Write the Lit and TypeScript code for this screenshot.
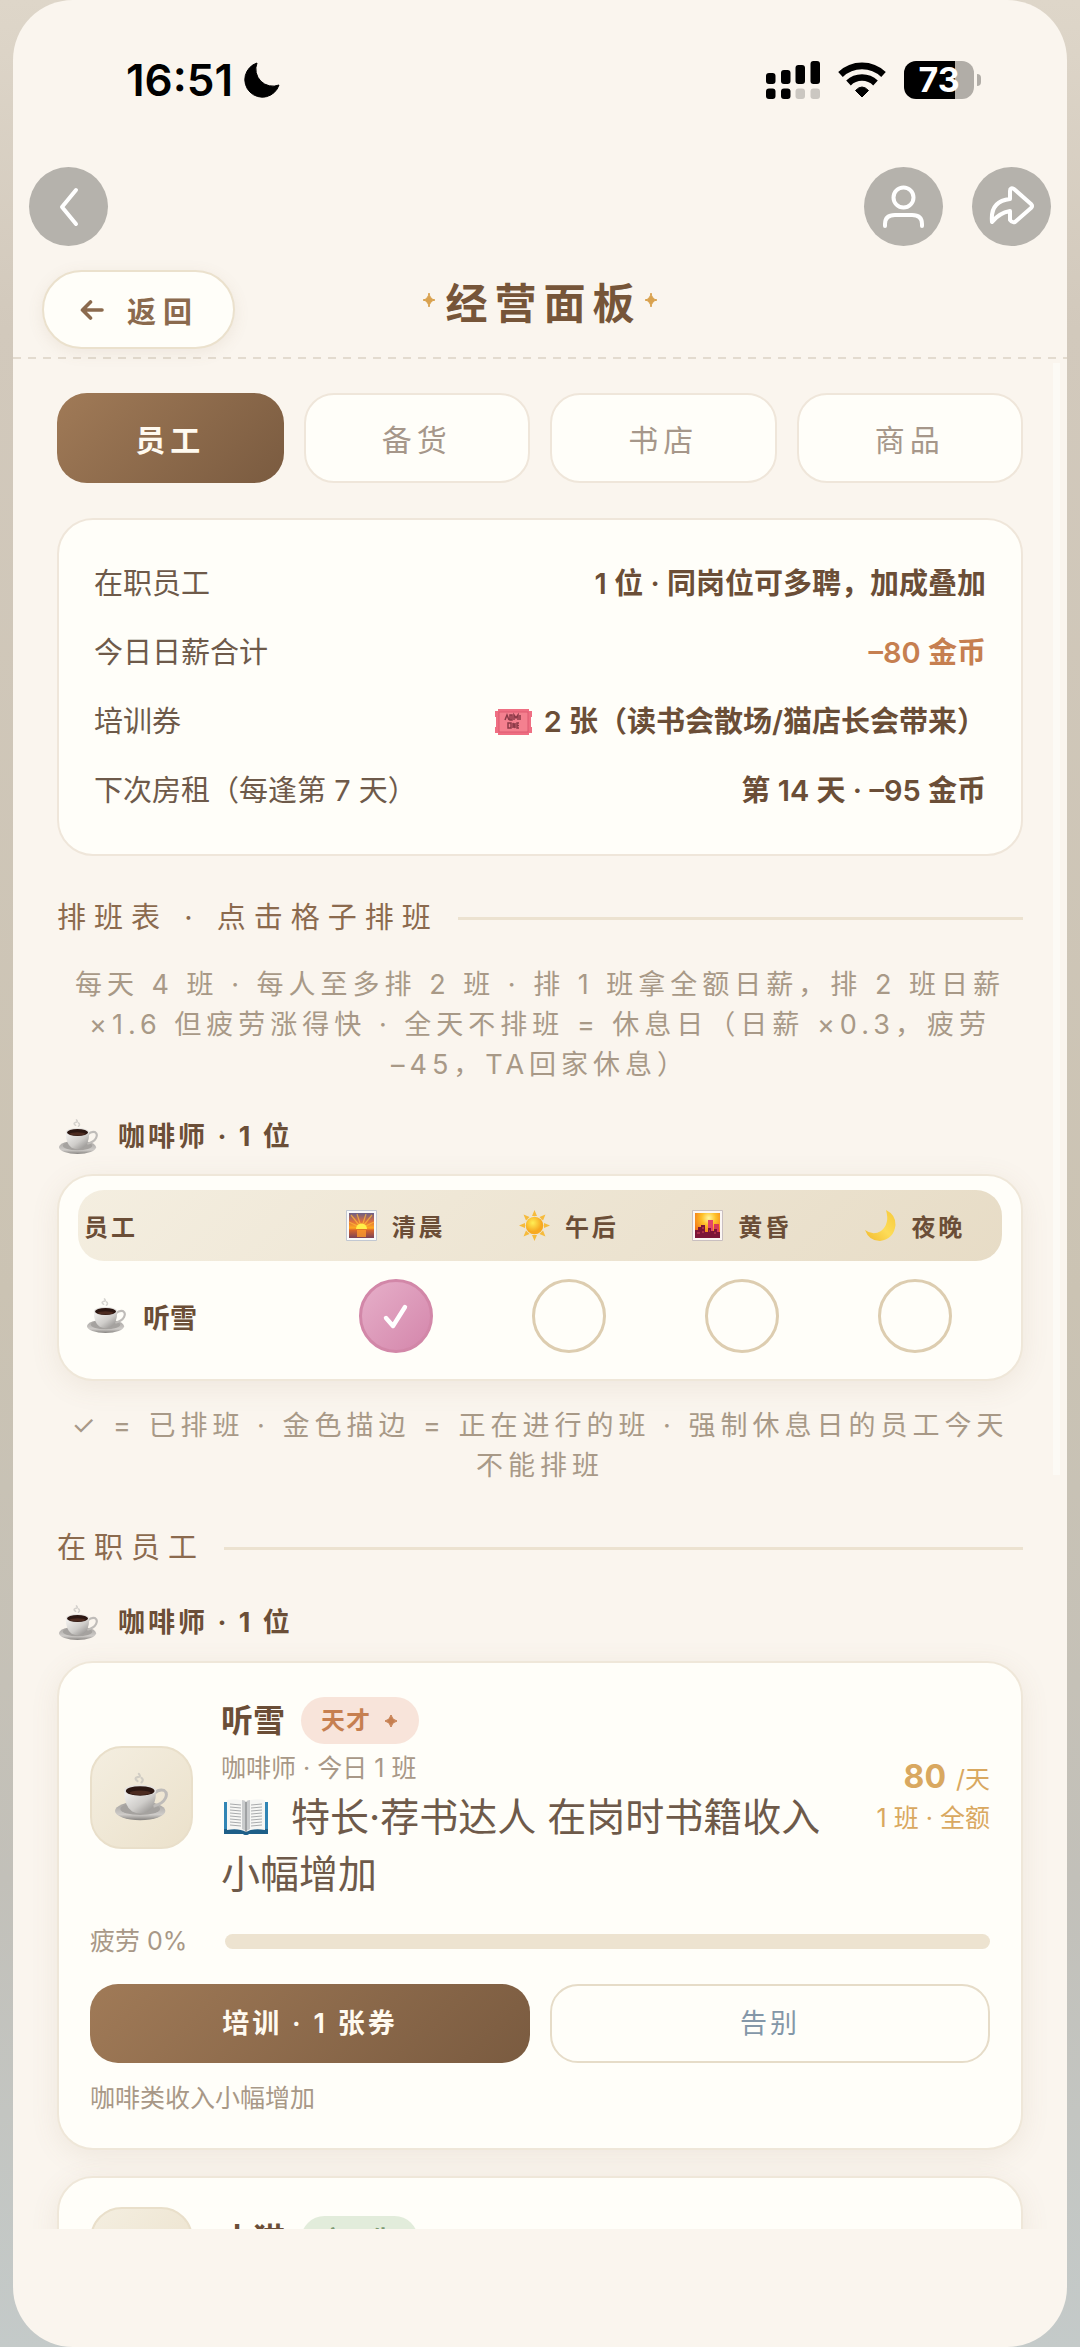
import { LitElement, html, css, svg, nothing } from "lit";
import { customElement, property, state } from "lit/decorators.js";
import { classMap } from "lit/directives/class-map.js";

const cup = () => html`<svg class="emoji" viewBox="0 0 40 36" aria-hidden="true">
  <defs>
    <linearGradient id="porcelain" x1="0" y1="0" x2="1" y2="1">
      <stop offset="0" stop-color="#f6f5f3" />
      <stop offset="0.55" stop-color="#cfcdca" />
      <stop offset="1" stop-color="#858280" />
    </linearGradient>
    <linearGradient id="saucer" x1="0" y1="0" x2="0" y2="1">
      <stop offset="0" stop-color="#a09d9a" />
      <stop offset="0.7" stop-color="#cfccc9" />
      <stop offset="1" stop-color="#85827f" />
    </linearGradient>
  </defs>
  <path d="M17 6 Q14 4 17 3 Q20 3 18 0.5 M20 7 Q22 5 20 3.5" fill="none" stroke="#bdbab7" stroke-width="1.6" stroke-linecap="round" opacity="0.6" />
  <ellipse cx="19" cy="28.5" rx="19" ry="7" fill="url(#saucer)" />
  <ellipse cx="19" cy="27" rx="15" ry="4.6" fill="#a5a29f" />
  <path d="M30 15 Q33 12 37 13 Q40 15 38 19 Q36 23 29 25" fill="none" stroke="#bfbcb9" stroke-width="2.2" />
  <path d="M7 13 Q7 25 13 29 Q19 32 25 29 Q31 25 31 13 Z" fill="url(#porcelain)" />
  <ellipse cx="19" cy="13" rx="12" ry="4.3" fill="#e6e4e1" />
  <ellipse cx="19" cy="13.4" rx="10.8" ry="3.6" fill="#2c1712" />
  <ellipse cx="19" cy="14.8" rx="8" ry="1.7" fill="#4c2b20" />
</svg>`;

const ticket = html`<svg class="ticket" viewBox="0 0 37 26" aria-hidden="true">
  <path d="M3 0 H34 V2 H37 V8 H36 V18 H37 V24 H34 V26 H3 V24 H0 V18 H1 V8 H0 V2 H3 Z" fill="#ef6f83" />
  <rect x="4" y="3" width="29" height="20" fill="#f4808f" stroke="#dd5a70" stroke-width="1" />
  <g stroke="#8c3a48" stroke-width="1.5" fill="none">
    <path d="M10 11 L12 6 L14 11 M15 6 V11 H17 V6 Z M19 11 V6 L21 9 L23 6 V11 M25 6 V11" />
    <path d="M13 14 H16 V19 H13 Z M18 19 V14 L20 19 V14 M24 14 H22 V19 H24 M22 16.5 H24" />
  </g>
</svg>`;

const book = html`<svg class="book" viewBox="0 0 46 36" aria-hidden="true">
  <path d="M1 3 H45 V35 H26 Q23 37 20 35 H1 Z" fill="#3185b5" />
  <path d="M1 30 H45 V35 H26 Q23 37 20 35 H1 Z" fill="#1e5f88" />
  <path d="M4 1 Q16 -1 23 3 Q30 -1 42 1 V31 Q30 29 23 33 Q16 29 4 31 Z" fill="#f6f6f4" />
  <path d="M19 1 Q22 1 23 3 Q24 1 27 1 V30 Q24 31 23 33 Q22 31 19 30 Z" fill="#c9cbcc" />
  <path d="M23 3 V33" stroke="#77797a" stroke-width="1" />
  <g stroke="#a9abad" stroke-width="1">
    <path d="M7 5 L18 6 M7 8 L18 9 M7 11 L18 12 M7 14 L18 15 M7 17 L18 18 M7 20 L18 21 M7 23 L18 24 M7 26 L18 27" />
    <path d="M39 5 L28 6 M39 8 L28 9 M39 11 L28 12 M39 14 L28 15 M39 17 L28 18 M39 20 L28 21 M39 23 L28 24 M39 26 L28 27" />
  </g>
</svg>`;

const sunrise = html`<svg class="slot" viewBox="0 0 31 31" aria-hidden="true">
  <defs>
    <linearGradient id="dawn" x1="0" y1="0" x2="0" y2="1">
      <stop offset="0" stop-color="#6a6088" />
      <stop offset="0.35" stop-color="#e0703c" />
      <stop offset="0.6" stop-color="#ffab1f" />
      <stop offset="0.68" stop-color="#d9652b" />
      <stop offset="1" stop-color="#7b4358" />
    </linearGradient>
  </defs>
  <rect width="31" height="31" rx="1" fill="#c2c8d2" />
  <rect x="1" y="1" width="29" height="29" fill="#fafafa" />
  <rect x="3" y="3" width="25" height="25" fill="url(#dawn)" />
  <path d="M15.5 18 L5 5 M15.5 18 L11 4 M15.5 18 L20 4 M15.5 18 L26 5 M15.5 18 L3 12 M15.5 18 L28 12" stroke="#ffb83a" stroke-width="1.2" opacity="0.75" />
  <path d="M10 19 A5.5 5.5 0 0 1 21 19 Z" fill="#fff04a" />
  <rect x="11" y="20" width="9" height="7" fill="#ff9a2c" opacity="0.8" />
</svg>`;

const sun = html`<svg class="slot" viewBox="0 0 31 31" aria-hidden="true">
  <defs>
    <radialGradient id="noon" cx="0.4" cy="0.35">
      <stop offset="0" stop-color="#ffee55" />
      <stop offset="1" stop-color="#f7a921" />
    </radialGradient>
  </defs>
  ${[0, 45, 90, 135, 180, 225, 270, 315].map(
    (a) => svg`<path d="M13 6 L15.5 0 L18 6 Z" fill="#f6bb3c" transform="rotate(${a} 15.5 15.5)" />`
  )}
  <circle cx="15.5" cy="15.5" r="8.8" fill="url(#noon)" />
</svg>`;

const dusk = html`<svg class="slot" viewBox="0 0 31 31" aria-hidden="true">
  <defs>
    <radialGradient id="glow" cx="0.55" cy="0.2" r="0.8">
      <stop offset="0" stop-color="#fff6a0" />
      <stop offset="0.35" stop-color="#ffc12a" />
      <stop offset="1" stop-color="#ee5a12" />
    </radialGradient>
  </defs>
  <rect width="31" height="31" rx="1" fill="#c9bfc0" />
  <rect x="1" y="1" width="29" height="29" fill="#fbf6f4" />
  <rect x="3" y="3" width="25" height="25" fill="url(#glow)" />
  <path d="M16 28 V10 H21 V28 Z" fill="#e2466a" />
  <path d="M22 28 V14 H27 V28 Z" fill="#d83a58" />
  <path d="M3 28 V20 H6 V17 H9 V15 H13 V28 Z M13 28 V22 H16 V18 H19 V28 Z M19 28 V21 H22 V19 H25 V22 H28 V28 Z" fill="#7c1437" />
  <path d="M5 23 H8 M10 18 H12 M10 22 H12 M17 21 H18 M22 23 H24" stroke="#d6455b" stroke-width="1" />
</svg>`;

const night = html`<svg class="slot" viewBox="0 0 31 31" aria-hidden="true">
  <defs>
    <linearGradient id="crescent" x1="0" y1="1" x2="1" y2="0">
      <stop offset="0" stop-color="#f2b92c" />
      <stop offset="0.5" stop-color="#fddc58" />
      <stop offset="1" stop-color="#f6c93a" />
    </linearGradient>
  </defs>
  <path d="M21 0 Q31 5 30.5 15 Q29 29 15 31 Q4 31 0 20 Q8 26 16 21 Q25 14 21 0 Z" fill="url(#crescent)" />
</svg>`;

const baseStyles = css`
  * {
    box-sizing: border-box;
  }
  h1,
  h2,
  h3,
  p,
  dl,
  dt,
  dd {
    margin: 0;
    font-weight: inherit;
    font-size: inherit;
  }
  button {
    margin: 0;
    font: inherit;
    color: inherit;
    cursor: pointer;
  }
  svg {
    display: block;
    flex: none;
  }
`;

interface Pay {
  wage: number;
  note: string;
  fatigue: number;
  effect: string;
}

interface Staff {
  name: string;
  badge: string;
  tone: "genius" | "fresh";
  role: string;
  talent?: string;
  pay?: Pay;
}

@customElement("status-bar")
class StatusBar extends LitElement {
  static styles = [
    baseStyles,
    css`
      :host {
        display: flex;
        align-items: center;
        justify-content: space-between;
        height: 160px;
        padding: 0 86px 0 113px;
        color: #000;
      }
      .clock,
      .signals {
        display: flex;
        align-items: center;
      }
      .clock {
        gap: 11px;
        font-size: 44px;
        font-weight: 600;
      }
      .moon {
        width: 36px;
        height: 36px;
      }
      .signals {
        gap: 18px;
      }
      .cell {
        width: 54px;
        height: 38px;
      }
      .wifi {
        width: 48px;
        height: 36px;
      }
      .battery {
        display: flex;
        align-items: center;
        gap: 3px;
      }
      .battery::after {
        content: "";
        width: 4px;
        height: 12px;
        border-radius: 0 6px 6px 0;
        background: #b1ada7;
      }
      .level {
        display: grid;
        place-items: center;
        width: 70px;
        height: 38px;
        border-radius: 12px;
        background: linear-gradient(90deg, #000 73%, #b1ada7 73%);
        color: #fff;
        font-size: 34px;
        line-height: 38px;
        font-weight: 700;
      }
    `,
  ];
  render() {
    return html`
      <div class="clock">
        <span>16:51</span>
        <svg class="moon" viewBox="0 0 36 36" aria-hidden="true">
          <path d="M13 1 A17.5 17.5 0 1 0 35 23 A17 17 0 0 1 13 1 Z" fill="#000" stroke="#000" stroke-linejoin="round" />
        </svg>
      </div>
      <div class="signals">
        <svg class="cell" viewBox="0 0 54 38" aria-hidden="true">
          <rect x="0" y="12" width="9.5" height="11" rx="3" />
          <rect x="15" y="9" width="9.5" height="14" rx="3" />
          <rect x="29.5" y="4" width="9.5" height="19" rx="3" />
          <rect x="44.5" y="0" width="9.5" height="23" rx="3" />
          <rect x="0" y="27.5" width="9.5" height="10.5" rx="3" />
          <rect x="15" y="27.5" width="9.5" height="10.5" rx="3" />
          <rect x="29.5" y="27.5" width="9.5" height="10.5" rx="3" fill="#cbc7c1" />
          <rect x="44.5" y="27.5" width="9.5" height="10.5" rx="3" fill="#cbc7c1" />
        </svg>
        <svg class="wifi" viewBox="0 0 48 36" fill="none" stroke="#000" stroke-width="6.6" aria-hidden="true">
          <path d="M2.5 12.5 A31 31 0 0 1 45.5 12.5" />
          <path d="M10.5 21 A19.5 19.5 0 0 1 37.5 21" />
          <path d="M24 35 L17.5 28.5 Q24 21.5 30.5 28.5 Z" fill="#000" stroke-width="1" stroke-linejoin="round" />
        </svg>
        <div class="battery"><span class="level">73</span></div>
      </div>
    `;
  }
}

@customElement("staff-card")
class StaffCard extends LitElement {
  @property({ attribute: false }) staff!: Staff;

  static styles = [
    baseStyles,
    css`
      :host {
        display: block;
        padding: 29px 31px 30px;
        border: 2px solid #efe7d9;
        border-radius: 36px;
        background: #fffef9;
        box-shadow: 0 6px 28px rgba(139, 105, 74, 0.1);
        color: #a89887;
        font-size: 25px;
        line-height: 39px;
      }
      .top {
        display: flex;
        align-items: center;
        gap: 28px;
      }
      .avatar {
        flex: none;
        display: grid;
        place-items: center;
        width: 103px;
        height: 103px;
        border: 2px solid #e9dfca;
        border-radius: 32px;
        background: linear-gradient(135deg, #f4eee0, #ebe1cb);
      }
      .avatar .emoji {
        width: 53px;
        height: 50px;
      }
      .info {
        flex: 1;
        min-width: 0;
      }
      .who {
        display: flex;
        align-items: center;
        gap: 16px;
        height: 57px;
      }
      .name {
        color: #6b4e37;
        font-size: 32px;
        font-weight: 700;
      }
      .badge {
        display: flex;
        align-items: center;
        gap: 14px;
        padding: 0 22px 0 20px;
        border-radius: 24px;
        font-size: 24px;
        line-height: 47px;
        font-weight: 600;
        letter-spacing: 1px;
      }
      .badge svg {
        width: 12px;
        height: 14px;
      }
      .genius {
        background: #f8e4da;
        color: #c67f50;
      }
      .fresh {
        background: #e2ecdb;
        color: #7d9a74;
      }
      .talent {
        color: #6e5a4a;
        font-size: 39px;
        line-height: 57px;
      }
      .book {
        display: inline-block;
        width: 46px;
        height: 36px;
        margin: 0 22px 0 2px;
        vertical-align: -4px;
      }
      .wage {
        flex: none;
        text-align: right;
        color: #d9a860;
        font-size: 25px;
      }
      .rate {
        display: flex;
        align-items: baseline;
        justify-content: flex-end;
        gap: 10px;
      }
      .rate strong {
        font-size: 32px;
        font-weight: 700;
      }
      .fatigue {
        display: flex;
        align-items: center;
        justify-content: space-between;
        margin-top: 20px;
      }
      .meter {
        width: 85%;
        height: 15px;
        border-radius: 8px;
        background: #ede3d0;
        overflow: hidden;
      }
      .fill {
        height: 100%;
        background: #d9a860;
      }
      .actions {
        display: grid;
        grid-template-columns: 1fr 1fr;
        gap: 20px;
        margin: 23px 0 16px;
      }
      .train,
      .leave {
        height: 79px;
        padding: 0;
        border-radius: 28px;
        font-size: 27px;
        letter-spacing: 3px;
      }
      .train {
        border: 0;
        background: linear-gradient(135deg, #a07a57, #7a5b40);
        color: #fffaf0;
        font-weight: 600;
      }
      .leave {
        border: 2px solid #e6dcc8;
        background: #fffef9;
        color: #8497a8;
      }
    `,
  ];

  private wage(p: Pay) {
    return html`<div class="wage">
      <div class="rate"><strong>${p.wage}</strong><span>/天</span></div>
      <div>${p.note}</div>
    </div>`;
  }

  private details(p: Pay) {
    return html`
      <div class="fatigue">
        <span>疲劳 ${p.fatigue}%</span>
        <div class="meter" role="progressbar" aria-label="疲劳" aria-valuenow=${p.fatigue}>
          <div class="fill" style="width:${p.fatigue}%"></div>
        </div>
      </div>
      <div class="actions">
        <button class="train" type="button">培训 · 1 张券</button>
        <button class="leave" type="button">告别</button>
      </div>
      <p>${p.effect}</p>
    `;
  }

  render() {
    const s = this.staff;
    return html`
      <div class="top">
        <div class="avatar">${cup()}</div>
        <div class="info">
          <div class="who">
            <h3 class="name">${s.name}</h3>
            <span class="badge ${s.tone}"
              >${s.badge}${s.tone === "genius"
                ? html`<svg viewBox="0 0 12 14" fill="currentColor" aria-hidden="true">
                    <path d="M6 1 Q7 6 12 7 Q7 8 6 13 Q5 8 0 7 Q5 6 6 1 Z" stroke="currentColor" />
                  </svg>`
                : nothing}</span
            >
          </div>
          <p>${s.role}</p>
          ${s.talent ? html`<p class="talent">${book}${s.talent}</p>` : nothing}
        </div>
        ${s.pay ? this.wage(s.pay) : nothing}
      </div>
      ${s.pay ? this.details(s.pay) : nothing}
    `;
  }
}

@customElement("app-root")
class AppRoot extends LitElement {
  @state() private tab = "员工";
  @state() private shifts = [true, false, false, false];

  private tabs = ["员工", "备货", "书店", "商品"];
  private slots = [
    { icon: sunrise, label: "清晨" },
    { icon: sun, label: "午后" },
    { icon: dusk, label: "黄昏" },
    { icon: night, label: "夜晚" },
  ];
  private team: Staff[] = [
    {
      name: "听雪",
      badge: "天才",
      tone: "genius",
      role: "咖啡师 · 今日 1 班",
      talent: "特长·荐书达人 在岗时书籍收入小幅增加",
      pay: { wage: 80, note: "1 班 · 全额", fatigue: 0, effect: "咖啡类收入小幅增加" },
    },
    { name: "小猫", badge: "实习生", tone: "fresh", role: "咖啡师" },
  ];

  static styles = [
    baseStyles,
    css`
      :host {
        display: block;
        height: 100vh;
        padding: 0 13px;
        overflow: hidden;
        background: linear-gradient(180deg, #ded6c9 0, #d2c9bc 14%, #cbc3b3 55%, #c2c0b9 80%, #c4cac9 100%);
        font-family: Inter, "Noto Sans CJK SC", "DejaVu Sans", sans-serif;
        color: #6e5a4a;
      }
      .phone {
        display: flex;
        flex-direction: column;
        height: 100%;
        padding-bottom: 118px;
        border-radius: 60px;
        background: #faf5ee;
        overflow: hidden;
      }
      .tools {
        flex: none;
        display: flex;
        gap: 29px;
        padding: 7px 16px 24px;
      }
      .tool {
        width: 79px;
        height: 79px;
        padding: 0;
        border: 0;
        border-radius: 50%;
        background: #b5b2ac;
      }
      .tool:first-child {
        margin-right: auto;
      }
      .tool svg {
        width: 79px;
        height: 79px;
        fill: none;
        stroke: #fff;
        stroke-width: 4;
        stroke-linecap: round;
        stroke-linejoin: round;
      }
      .header {
        flex: none;
        display: grid;
        grid-template-columns: 1fr auto 1fr;
        padding: 0 29px 10px;
        background: repeating-linear-gradient(90deg, #e3dbcf 0 8px, transparent 8px 15px) bottom / 100% 2px no-repeat;
      }
      .back {
        justify-self: start;
        display: flex;
        align-items: center;
        gap: 23px;
        height: 79px;
        padding: 0 34px 0 36px;
        border: 2px solid #ebe1cd;
        border-radius: 40px;
        background: #fffef9;
        box-shadow: 0 4px 16px rgba(139, 105, 74, 0.1);
        color: #8b6a4e;
        font-size: 29px;
        font-weight: 600;
        letter-spacing: 7px;
      }
      .back svg {
        width: 24px;
        height: 20px;
      }
      .title {
        display: flex;
        align-items: center;
        gap: 10px;
        height: 60px;
        color: #765539;
        font-size: 42px;
        font-weight: 700;
        letter-spacing: 7px;
      }
      .title span {
        margin-right: -7px;
      }
      .title svg {
        width: 12px;
        height: 14px;
      }
      .scroll {
        flex: 1;
        min-height: 0;
        display: flex;
        flex-direction: column;
        padding: 34px 44px 0;
        overflow: hidden;
        background: linear-gradient(#fcfaf5, #fcfaf5) right 7px top 4px / 7px 1112px no-repeat;
      }
      .scroll > * {
        flex: none;
      }
      .tabs {
        display: grid;
        grid-template-columns: repeat(4, 1fr);
        gap: 20px;
      }
      .tab {
        height: 90px;
        padding: 0;
        border: 2px solid #efe6da;
        border-radius: 30px;
        background: #fffef9;
        color: #a6978a;
        font-size: 30px;
        letter-spacing: 5px;
      }
      .tab.on {
        border: 0;
        background: linear-gradient(135deg, #a07a57, #7a5b40);
        color: #fffaf0;
        font-weight: 600;
      }
      .summary {
        margin-top: 35px;
        padding: 29px 35px;
        border: 2px solid #efe6da;
        border-radius: 36px;
        background: #fffef9;
        font-size: 29px;
        line-height: 69px;
      }
      .line {
        display: flex;
        justify-content: space-between;
      }
      .line dd {
        display: flex;
        align-items: center;
        gap: 12px;
        color: #6b4e37;
        font-weight: 600;
      }
      .line .cost {
        color: #c67f50;
      }
      .ticket {
        width: 37px;
        height: 26px;
      }
      .section {
        display: flex;
        align-items: center;
        gap: 19px;
        margin-top: 41px;
        color: #8b6a4e;
        font-size: 29px;
        line-height: 42px;
        letter-spacing: 8px;
      }
      .section::after {
        content: "";
        flex: 1;
        height: 3px;
        background: #ece2d0;
      }
      .hint {
        padding: 0 3px;
        color: #a89987;
        font-size: 27px;
        line-height: 40px;
        letter-spacing: 5px;
        text-align: center;
      }
      .keep {
        white-space: nowrap;
      }
      .rules {
        margin-top: 26px;
      }
      .legend {
        margin-top: 25px;
      }
      .group {
        display: flex;
        align-items: center;
        gap: 20px;
        color: #6b4e37;
        font-size: 27px;
        line-height: 42px;
        font-weight: 700;
        letter-spacing: 3px;
      }
      .group .emoji {
        margin-left: 2px;
      }
      .emoji {
        width: 39px;
        height: 36px;
      }
      .rota-group {
        margin: 31px 0 16px;
      }
      .team-group {
        margin: 33px 0 17px;
      }
      .rota {
        display: block;
        padding: 14px 19px;
        border: 2px solid #efe7d9;
        border-radius: 36px;
        background: #fffef9;
        box-shadow: 0 6px 28px rgba(139, 105, 74, 0.1);
        color: #6b4e37;
      }
      .rota thead,
      .rota tbody {
        display: block;
      }
      .rota tr {
        display: grid;
        grid-template-columns: 4fr repeat(4, 3fr);
        align-items: center;
      }
      .rota .head {
        height: 71px;
        border-radius: 26px;
        background: linear-gradient(135deg, #f4eee0, #e7dcc6);
        font-size: 24px;
        letter-spacing: 3px;
      }
      .rota th,
      .rota td {
        display: flex;
        align-items: center;
        justify-content: center;
        padding: 0;
        font-weight: 700;
      }
      .rota .head th {
        gap: 15px;
      }
      .rota .head th:first-child {
        justify-content: flex-start;
        padding-left: 6px;
      }
      .slot {
        width: 31px;
        height: 31px;
      }
      .row {
        padding: 18px 0 12px;
      }
      .row th {
        justify-content: flex-start;
        gap: 17px;
        padding-left: 9px;
        font-size: 27px;
      }
      .shift {
        display: grid;
        place-items: center;
        width: 74px;
        height: 74px;
        padding: 0;
        border: 3px solid #ddcdb0;
        border-radius: 50%;
        background: #fffef9;
      }
      .shift.on {
        border-color: #d287a8;
        background: linear-gradient(135deg, #e6afc9, #d486ab);
      }
      .shift svg {
        width: 27px;
        height: 27px;
      }
      .team {
        display: grid;
        gap: 26px;
      }
    `,
  ];

  private toggle(i: number) {
    this.shifts = this.shifts.map((v, n) => (n === i ? !v : v));
  }

  private star() {
    return html`<svg viewBox="0 0 12 14" aria-hidden="true">
      <path d="M6 0 Q6.8 6.2 12 7 Q6.8 7.8 6 14 Q5.2 7.8 0 7 Q5.2 6.2 6 0 Z" fill="#d9a24f" stroke="#d9a24f" />
    </svg>`;
  }

  render() {
    return html`
      <div class="phone">
        <status-bar></status-bar>
        <nav class="tools">
          <button class="tool" type="button" aria-label="后退">
            <svg viewBox="0 0 79 79"><path d="M47 23 L33 40 L47 57" /></svg>
          </button>
          <button class="tool" type="button" aria-label="个人">
            <svg viewBox="0 0 79 79"><circle cx="39.5" cy="30.5" r="10" /><path d="M21 59 V57 Q21 48 31 48 H48 Q58 48 58 57 V59" /></svg>
          </button>
          <button class="tool" type="button" aria-label="分享">
            <svg viewBox="0 0 79 79">
              <path d="M38 32 V24 Q38 20 42 22 L59 37 Q61 39 59 41 L43 55 Q40 56 38 53 V44 Q27 46 20 55 Q18 34 38 32 Z" />
            </svg>
          </button>
        </nav>
        <header class="header">
          <button class="back" type="button">
            <svg viewBox="0 0 24 20" fill="none" stroke="#8b6a4e" stroke-width="3.6" stroke-linecap="round" stroke-linejoin="round" aria-hidden="true">
              <path d="M22 10 H3 M10.5 2 L2.5 10 L10.5 18" />
            </svg>
            <span>返回</span>
          </button>
          <h1 class="title">${this.star()}<span>经营面板</span>${this.star()}</h1>
        </header>
        <main class="scroll">
          <nav class="tabs">
            ${this.tabs.map(
              (t) => html`<button
                type="button"
                class=${classMap({ tab: true, on: t === this.tab })}
                aria-pressed=${t === this.tab}
                @click=${() => (this.tab = t)}
              >
                ${t}
              </button>`
            )}
          </nav>

          <dl class="summary">
            <div class="line"><dt>在职员工</dt><dd>1 位 · 同岗位可多聘，加成叠加</dd></div>
            <div class="line"><dt>今日日薪合计</dt><dd class="cost">–80 金币</dd></div>
            <div class="line"><dt>培训券</dt><dd>${ticket}2 张（读书会散场/猫店长会带来）</dd></div>
            <div class="line"><dt>下次房租（每逢第 7 天）</dt><dd>第 14 天 · –95 金币</dd></div>
          </dl>

          <h2 class="section">排班表 · 点击格子排班</h2>
          <p class="hint rules">
            每天 4 班 · 每人至多排 2 班 · 排 1 班拿全额日薪，排 2 班日薪 ×1.6 但疲劳涨得快 · 全天不排班 = 休息日（日薪 ×0.3，疲劳 <span class="keep">–45，</span>TA回家休息）
          </p>

          <h3 class="group rota-group">${cup()}<span>咖啡师 · 1 位</span></h3>
          <table class="rota">
            <thead>
              <tr class="head">
                <th scope="col">员工</th>
                ${this.slots.map((s) => html`<th scope="col">${s.icon}<span>${s.label}</span></th>`)}
              </tr>
            </thead>
            <tbody>
              <tr class="row">
                <th scope="row">${cup()}<span>听雪</span></th>
                ${this.slots.map(
                  (s, i) => html`<td>
                    <button
                      type="button"
                      class=${classMap({ shift: true, on: this.shifts[i] })}
                      aria-pressed=${this.shifts[i]}
                      aria-label=${s.label}
                      @click=${() => this.toggle(i)}
                    >
                      ${this.shifts[i]
                        ? html`<svg viewBox="0 0 27 27" fill="none" stroke="#fff" stroke-width="4.4" stroke-linecap="round" stroke-linejoin="round">
                            <path d="M4 15 L11 23 L23 4" />
                          </svg>`
                        : nothing}
                    </button>
                  </td>`
                )}
              </tr>
            </tbody>
          </table>
          <p class="hint legend">✓ = 已排班 · 金色描边 = 正在进行的班 · 强制休息日的员工今天不能排班</p>

          <h2 class="section">在职员工</h2>
          <h3 class="group team-group">${cup()}<span>咖啡师 · 1 位</span></h3>
          <div class="team">${this.team.map((s) => html`<staff-card .staff=${s}></staff-card>`)}</div>
        </main>
      </div>
    `;
  }
}
